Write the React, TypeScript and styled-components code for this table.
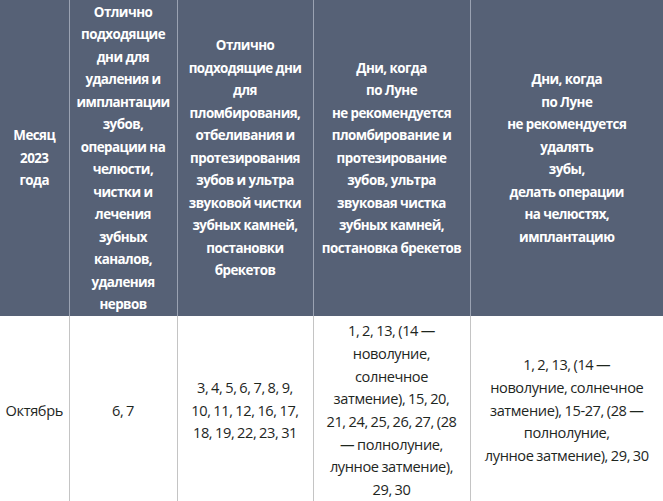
import React from "react";
import styled, { createGlobalStyle } from "styled-components";

const GlobalStyle = createGlobalStyle`
  html, body {
    margin: 0;
    padding: 0;
    background: #ffffff;
    overflow: hidden;
  }
`;

const Table = styled.table`
  width: 663px;
  border-collapse: collapse;
  table-layout: fixed;
  font-family: "Open Sans", "Noto Sans", sans-serif;
`;

const HeadCell = styled.th<{ $w: number }>`
  width: ${(p) => p.$w}px;
  height: 316px;
  padding: 0;
  background: #566176;
  color: #ffffff;
  font-size: 13.4px;
  font-weight: 700;
  line-height: 22.5px;
  letter-spacing: -0.55px;
  white-space: nowrap;
  text-align: center;
  vertical-align: middle;
  border-left: 1px solid #9aa2b2;
  box-sizing: border-box;

  &:first-child {
    border-left: none;
  }
`;

const Cell = styled.td`
  height: 188px;
  padding: 0;
  color: #1e261e;
  font-size: 14.6px;
  line-height: 22.7px;
  letter-spacing: -0.4px;
  word-spacing: -0.6px;
  white-space: nowrap;
  text-align: center;
  vertical-align: middle;
  border-left: 1px solid #c4c4c4;
  box-sizing: border-box;

  &:first-child {
    border-left: none;
  }
`;

const headers: { w: number; lines: string[] }[] = [
  { w: 69, lines: ["Месяц", "2023", "года"] },
  {
    w: 108,
    lines: [
      "Отлично",
      "подходящие",
      "дни для",
      "удаления и",
      "имплантации",
      "зубов,",
      "операции на",
      "челюсти,",
      "чистки и",
      "лечения",
      "зубных",
      "каналов,",
      "удаления",
      "нервов",
    ],
  },
  {
    w: 136,
    lines: [
      "Отлично",
      "подходящие дни",
      "для",
      "пломбирования,",
      "отбеливания и",
      "протезирования",
      "зубов и ультра",
      "звуковой чистки",
      "зубных камней,",
      "постановки",
      "брекетов",
    ],
  },
  {
    w: 157,
    lines: [
      "Дни, когда",
      "по Луне",
      "не рекомендуется",
      "пломбирование и",
      "протезирование",
      "зубов, ультра",
      "звуковая чистка",
      "зубных камней,",
      "постановка брекетов",
    ],
  },
  {
    w: 193,
    lines: [
      "Дни, когда",
      "по Луне",
      "не рекомендуется",
      "удалять",
      "зубы,",
      "делать операции",
      "на челюстях,",
      "имплантацию",
    ],
  },
];

const rows: string[][] = [
  ["Октябрь"],
  ["6, 7"],
  ["3, 4, 5, 6, 7, 8, 9,", "10, 11, 12, 16, 17,", "18, 19, 22, 23, 31"],
  [
    "1, 2, 13, (14 —",
    "новолуние,",
    "солнечное",
    "затмение), 15, 20,",
    "21, 24, 25, 26, 27, (28",
    "— полнолуние,",
    "лунное затмение),",
    "29, 30",
  ],
  [
    "1, 2, 13, (14 —",
    "новолуние, солнечное",
    "затмение), 15-27, (28 —",
    "полнолуние,",
    "лунное затмение), 29, 30",
  ],
];

const withBreaks = (lines: string[]) =>
  lines.map((l, i) => (
    <React.Fragment key={i}>
      {i > 0 && <br />}
      {l}
    </React.Fragment>
  ));

export default function App() {
  return (
    <>
      <GlobalStyle />
      <Table>
        <thead>
          <tr>
            {headers.map((h, i) => (
              <HeadCell key={i} $w={h.w}>
                {withBreaks(h.lines)}
              </HeadCell>
            ))}
          </tr>
        </thead>
        <tbody>
          <tr>
            {rows.map((r, i) => (
              <Cell key={i}>{withBreaks(r)}</Cell>
            ))}
          </tr>
        </tbody>
      </Table>
    </>
  );
}
